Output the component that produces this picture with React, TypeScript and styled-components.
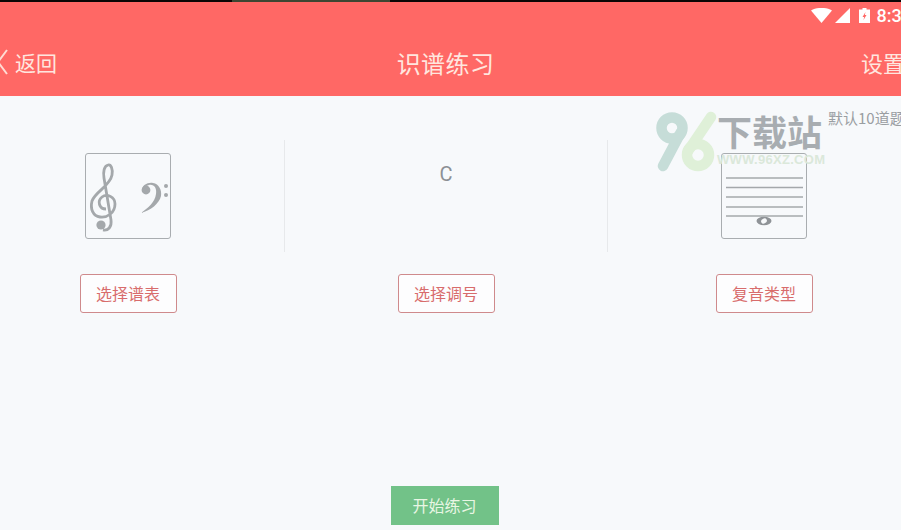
import React from "react";
import styled, { createGlobalStyle } from "styled-components";

const INK = "#a4a8ab";

const GlobalStyle = createGlobalStyle`
  html, body {
    margin: 0;
    height: 100%;
    overflow: hidden;
    background: #f7f9fb;
    font-family: "Noto Sans CJK SC", "Liberation Sans", sans-serif;
  }
`;

function TrebleClef() {
  return (
    <g>
      <path
        d="M20 55C13 55 11 47 16 43C21 39 29 43 29 50C29 59 21 64 14 63C7 62 4 55 6 47C9 38 24 32 26 21C27 15 25 10 22 11C18 12 17 18 18 24L25 66C26 73 22 77 17 76"
        fill="none"
        stroke={INK}
        strokeWidth="2.8"
      />
      <circle cx="15" cy="71" r="4.6" fill={INK} />
    </g>
  );
}

function BassClef() {
  return (
    <g fill={INK}>
      <circle cx="60" cy="36" r="4.4" />
      <path d="M56 36C56 31 62 28 67 29C73 30 76 36 75 42C73 50 65 56 55 59C62 54 69 48 70 40C71 34 68 30 63 31C60 32 58 33 56 36Z" />
      <circle cx="80" cy="32" r="2" />
      <circle cx="80" cy="41" r="2" />
    </g>
  );
}

function StaffNote() {
  return (
    <g>
      {[24, 33.5, 43, 53, 62].map((y) => (
        <line key={y} x1="4" x2="81" y1={y} y2={y} stroke={INK} strokeWidth="1.3" />
      ))}
      <ellipse cx="42" cy="67" rx="7.5" ry="4.2" fill="#8f9397" />
      <ellipse cx="42" cy="67" rx="3" ry="2.4" fill="#f7f9fb" transform="rotate(-30 42 67)" />
    </g>
  );
}

export default function App(): JSX.Element {
  return (
    <>
      <GlobalStyle />
      <Frame>
        <TopStrip>
          <StripSegment $width={232} $color="#0c0605" />
          <StripSegment $width={158} $color="#3d4632" />
          <StripSegment $color="#0c0605" />
        </TopStrip>
        <Header>
          <StatusRow>
            <svg width="21" height="15" viewBox="0 0 21 15">
              <path d="M0 2.5C6 -1 15 -1 21 2.5L10.5 15Z" fill="#fff" />
            </svg>
            <SignalIcon width="15" height="15" viewBox="0 0 15 15">
              <path d="M15 0V15H0Z" fill="#fff" />
            </SignalIcon>
            <BatteryIcon width="11" height="15" viewBox="0 0 11 15">
              <path d="M3.5 0H7.5V1.5H11V15H0V1.5H3.5Z" fill="#fff" />
              <path d="M6.5 4L3.5 9H5.2L4.5 12L7.5 7H5.8Z" fill="#ff6865" />
            </BatteryIcon>
            <Time>8:30</Time>
          </StatusRow>
          <NavRow>
            <BackLink>
              <svg width="11" height="26" viewBox="0 0 11 26">
                <path d="M10 1L1 13L10 25" fill="none" stroke="#ffdcd4" strokeWidth="2" />
              </svg>
              <span>返回</span>
            </BackLink>
            <Title>识谱练习</Title>
            <SettingsLink>设置</SettingsLink>
          </NavRow>
        </Header>

        <Main>
          <Columns>
            <Column>
              <Sheet>
                <svg width="84" height="84" viewBox="0 0 84 84">
                  <TrebleClef />
                  <BassClef />
                </svg>
              </Sheet>
              <PickButton>选择谱表</PickButton>
            </Column>
            <Divider />
            <Column>
              <KeySlot>C</KeySlot>
              <PickButton>选择调号</PickButton>
            </Column>
            <Divider />
            <Column>
              <Sheet>
                <svg width="84" height="84" viewBox="0 0 84 84">
                  <StaffNote />
                </svg>
              </Sheet>
              <PickButton>复音类型</PickButton>
            </Column>
          </Columns>
          <StartRow>
            <StartButton>开始练习</StartButton>
          </StartRow>

          <Watermark>
            <svg width="64" height="62" viewBox="0 0 64 62">
              <g fill="none" strokeWidth="10.5" strokeLinecap="round">
                <circle cx="17" cy="17" r="10.5" stroke="#c6ddd8" />
                <path d="M26 21L8 55" stroke="#c6ddd8" />
                <circle cx="43" cy="44" r="11" stroke="#dff0d8" />
                <path d="M33 40L56 6" stroke="#dff0d8" />
              </g>
            </svg>
            <WatermarkText>
              <WatermarkName>下载站</WatermarkName>
              <WatermarkUrl>WWW.96XZ.COM</WatermarkUrl>
            </WatermarkText>
          </Watermark>
          <DefaultNote>默认10道题</DefaultNote>
        </Main>
      </Frame>
    </>
  );
}

const Frame = styled.div`
  position: relative;
  display: flex;
  flex-direction: column;
  width: 949px;
  height: 530px;
  margin-left: -28px;
  background: #f7f9fb;
`;

const TopStrip = styled.div`
  display: flex;
  height: 2px;
  margin-left: 28px;
`;

const StripSegment = styled.div<{ $width?: number; $color: string }>`
  flex: ${({ $width }) => ($width ? `0 0 ${$width}px` : "1")};
  background: ${({ $color }) => $color};
`;

const Header = styled.header`
  height: 94px;
  background: #ff6865;
`;

const StatusRow = styled.div`
  display: flex;
  align-items: center;
  justify-content: flex-end;
  height: 26px;
  padding-right: 9px;
`;

const SignalIcon = styled.svg`
  margin-left: 3px;
`;

const BatteryIcon = styled.svg`
  margin-left: 9px;
`;

const Time = styled.span`
  margin-left: 7px;
  color: #fff;
  font-family: Roboto, "Liberation Sans", sans-serif;
  font-size: 18px;
  font-weight: 500;
`;

const NavRow = styled.nav`
  display: grid;
  grid-template-columns: 1fr auto 1fr;
  align-items: center;
  height: 68px;
  color: #ffe6df;
`;

const BackLink = styled.div`
  display: flex;
  align-items: center;
  gap: 7px;
  padding-left: 25px;
  font-size: 21px;
`;

const Title = styled.div`
  padding-right: 2px;
  font-size: 24px;
  letter-spacing: 0.4px;
`;

const SettingsLink = styled.div`
  padding-right: 16px;
  text-align: right;
  font-size: 22px;
`;

const Main = styled.main`
  position: relative;
  flex: 1;
  display: flex;
  flex-direction: column;
  justify-content: space-between;
`;

const Columns = styled.div`
  display: grid;
  grid-template-columns: 312px 1px 322px 1px 312px;
  align-items: start;
  margin-top: 44px;
`;

const Column = styled.section`
  display: flex;
  flex-direction: column;
  align-items: center;
  padding-top: 13px;
`;

const Divider = styled.div`
  height: 112px;
  background: #e7e9eb;
`;

const Sheet = styled.div`
  box-sizing: border-box;
  width: 86px;
  height: 86px;
  border: 1.5px solid #a9adb0;
  border-radius: 3px;
  line-height: 0;
`;

const KeySlot = styled.div`
  box-sizing: border-box;
  height: 86px;
  padding-top: 8px;
  color: #8c9095;
  font-family: Roboto, "Liberation Sans", sans-serif;
  font-size: 20px;
  line-height: 26px;
`;

const PickButton = styled.button`
  box-sizing: border-box;
  width: 97px;
  height: 39px;
  margin-top: 35px;
  padding: 0 0 2px;
  border: 1px solid #cf8a8c;
  border-radius: 3px;
  background: #fdfdfe;
  color: #d86c6c;
  font-family: inherit;
  font-size: 16px;
`;

const StartRow = styled.div`
  display: flex;
  justify-content: center;
  padding: 0 0 5px 0;
`;

const StartButton = styled.button`
  width: 108px;
  height: 39px;
  margin-right: 4px;
  padding: 0 0 2px;
  border: 0;
  background: #72c288;
  color: #e9f6e4;
  font-family: inherit;
  font-size: 16px;
`;

const Watermark = styled.div`
  position: absolute;
  top: 15px;
  left: 683px;
  display: flex;
  align-items: flex-start;
`;

const WatermarkText = styled.div`
  display: flex;
  flex-direction: column;
  margin-left: -2px;
`;

const WatermarkName = styled.div`
  color: #a8adb1;
  font-size: 35px;
  font-weight: 700;
  line-height: 40px;
`;

const WatermarkUrl = styled.div`
  margin-top: 2px;
  color: #dbe8da;
  font-family: "Liberation Sans", sans-serif;
  font-size: 13px;
  font-weight: 700;
  letter-spacing: 0.3px;
  line-height: 14px;
`;

const DefaultNote = styled.div`
  position: absolute;
  top: 12px;
  left: 856px;
  color: #9a9ea2;
  font-size: 15px;
  line-height: 20px;
  white-space: nowrap;
`;
